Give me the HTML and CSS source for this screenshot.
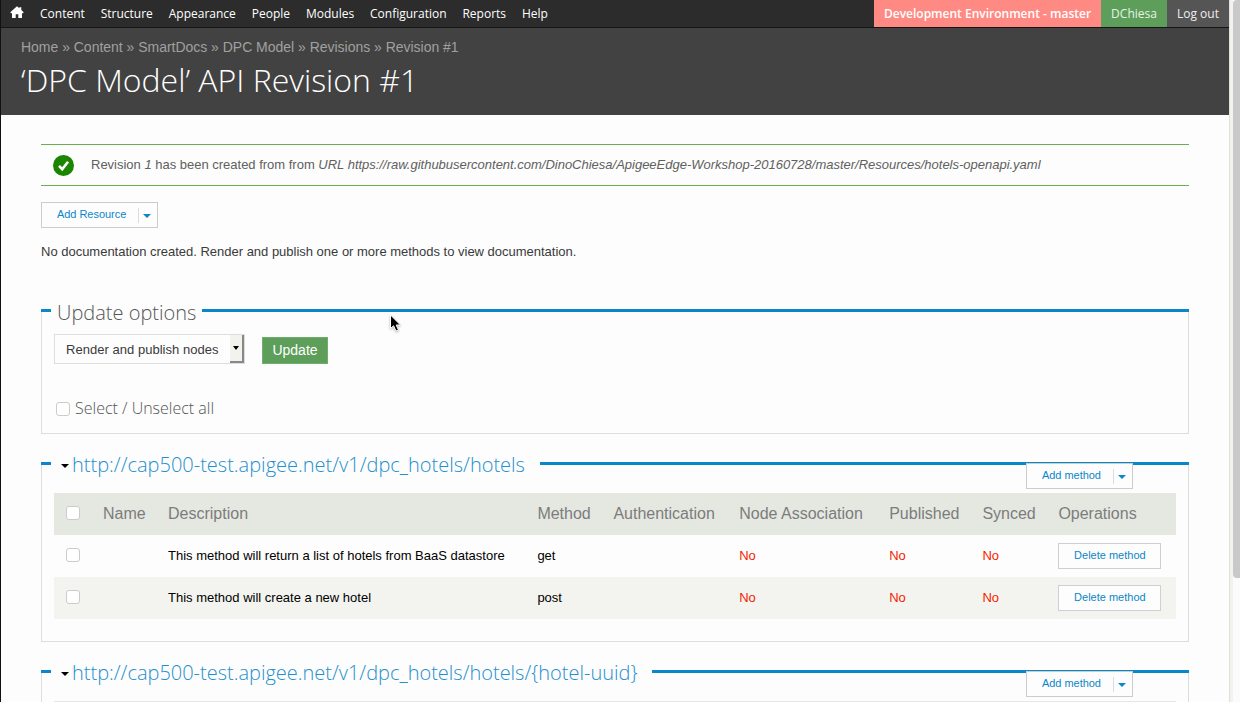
FILE: index.html
```html
<!DOCTYPE html>
<html lang="en">
<head>
<meta charset="utf-8">
<title>‘DPC Model’ API Revision #1</title>
<link rel="stylesheet" href="styles.css">
</head>
<body>
<div class="window">
<div class="page">
  <nav class="toolbar">
    <svg class="home" viewBox="0 0 14 13" width="14" height="13"><path fill="#fff" d="M7 .3 9.300 2.200V1.200h2V3.900L13.700 6.200 13 7.300h-1V12H8.300V8.200H5.700V12H2V7.300H1L.3 6.200z"/></svg>
    <a>Content</a><a>Structure</a><a>Appearance</a><a>People</a><a>Modules</a><a>Configuration</a><a>Reports</a><a>Help</a>
    <span class="env">Development Environment - master</span>
    <span class="user">DChiesa</span>
    <span class="logout">Log out</span>
  </nav>
  <header class="banner">
    <div class="crumbs">Home » Content » SmartDocs » DPC Model » Revisions » Revision #1</div>
    <h1>‘DPC Model’ API Revision #1</h1>
  </header>
  <main>
    <div class="status">
      <svg width="21" height="21" viewBox="0 0 21 21"><circle cx="10.500" cy="10.500" r="10.500" fill="#1c8500"/><path d="M6 10.800 9.200 14.200 15 6.800" fill="none" stroke="#fff" stroke-width="2.600"/></svg>
      <p>Revision <em>1</em> has been created from from <em>URL https://raw.githubusercontent.com/DinoChiesa/ApigeeEdge-Workshop-20160728/master/Resources/hotels-openapi.yaml</em></p>
    </div>
    <div class="drop resource"><span>Add Resource</span><i></i></div>
    <p class="note">No documentation created. Render and publish one or more methods to view documentation.</p>

    <section class="options">
      <div class="head"><b></b><h2>Update options</h2><b class="fill"></b></div>
      <div class="box">
        <div class="controls">
          <div class="select"><span>Render and publish nodes</span><i></i></div>
          <div class="update">Update</div>
        </div>
        <div class="all"><span class="check"></span><label>Select / Unselect all</label></div>
      </div>
    </section>

    <section class="hotels">
      <div class="head"><b></b><h2 class="link">http://cap500-test.apigee.net/v1/dpc_hotels/hotels</h2><b class="fill"></b></div>
      <div class="drop method"><span>Add method</span><i></i></div>
      <div class="box">
        <div class="row th"><span class="check"></span><span>Name</span><span>Description</span><span>Method</span><span>Authentication</span><span>Node Association</span><span>Published</span><span>Synced</span><span>Operations</span></div>
        <div class="row"><span class="check"></span><span></span><span>This method will return a list of hotels from BaaS datastore</span><span>get</span><span></span><span class="no">No</span><span class="no">No</span><span class="no">No</span><span class="delete">Delete method</span></div>
        <div class="row even"><span class="check"></span><span></span><span>This method will create a new hotel</span><span>post</span><span></span><span class="no">No</span><span class="no">No</span><span class="no">No</span><span class="delete">Delete method</span></div>
      </div>
    </section>

    <section class="uuid">
      <div class="head"><b></b><h2 class="link">http://cap500-test.apigee.net/v1/dpc_hotels/hotels/{hotel-uuid}</h2><b class="fill"></b></div>
      <div class="drop method"><span>Add method</span><i></i></div>
      <div class="box"><div class="row th"></div></div>
    </section>
  </main>
</div>
<div class="scrollbar"><div class="thumb"></div></div>
<svg class="pointer" width="16" height="20" viewBox="0 0 16 20"><path d="M2.500 1V14.500L5.600 11.800 8 17 10.500 16 8.200 11H12.500z" fill="#000" stroke="#fff" stroke-width="1"/></svg>
</div>
</body>
</html>
```
FILE: styles.css
```css
* { box-sizing: border-box; }
body { margin: 0; background: #fdfdfd; color: #3a3a3a; font: 13px "Liberation Sans", Arial, sans-serif; }
h1, h2, p { margin: 0; font-weight: 300; }
.window { display: flex; position: relative; width: 1240px; height: 702px; overflow: hidden; border-left: 1px solid #111; }
.page { width: 1228px; }
.toolbar { display: flex; height: 28px; background: #2c2c2c; border-bottom: 1px solid #151515; color: #fff; font: 12px/27px "Open Sans", sans-serif; padding-left: 9px; white-space: nowrap; }
.toolbar a { margin-right: 15.9px; }
.home { margin: 6px 16px 0 0; }
.env { margin-left: auto; width: 227px; background: #ff8a84; font-weight: 600; text-align: center; }
.user { width: 66px; background: #5c9e5a; color: #e6f3e4; text-align: center; }
.logout { width: 62px; background: #555; color: #eee; text-align: center; }
.banner { height: 87px; background: #424242; padding: 11px 20px 0; }
.crumbs { color: #a0a0a0; font-size: 14px; line-height: 16px; letter-spacing: -.02px; white-space: nowrap; }
h1 { color: #fff; font: 300 32px/44px "Open Sans", sans-serif; margin-top: 3px; white-space: nowrap; }
main { padding: 29px 40px 0; }
.status { display: flex; align-items: center; height: 42px; border: solid #68b04e; border-width: 1px 0; padding-left: 12px; color: #606060; white-space: nowrap; }
.status p { margin-left: 17px; padding-bottom: 2px; letter-spacing: -.008px; }
.drop { display: flex; align-items: center; height: 26px; background: #fdfdfd; border: 1px solid #ccc; color: #0b86c8; font-size: 11px; padding-left: 15px; white-space: nowrap; }
.drop span { padding-bottom: 2px; letter-spacing: -.04px; }
.drop i { margin-left: auto; width: 19px; height: 15px; border-left: 1px solid #ddd; display: flex; align-items: center; justify-content: center; padding-right: 2px; }
.drop i::after, .select i::after { content: ""; border: 4px solid transparent; border-top-color: #0b86c8; border-bottom: 0; margin-top: 2px; }
.resource { width: 117px; margin-top: 16px; }
.note { line-height: 16px; margin-top: 16px; letter-spacing: -.01px; }
.options { margin-top: 49px; }
.head { display: flex; height: 3px; }
.head b { width: 10px; height: 3px; background: #0a87ca; }
.head .fill { flex: 1; }
.head h2 { font: 300 20px/28px "Open Sans", sans-serif; margin: -10px 6px 0; height: 28px; color: #555; white-space: nowrap; }
.head .link { color: #2490cd; margin: -11px 15px 0 10px; display: flex; align-items: center; }
.uuid .link { letter-spacing: -.01px; }
.link::before { content: ""; border: 4px solid transparent; border-top: 4px solid #000; border-bottom: 0; margin: 1px 3px 0 0; }
.box { border: 1px solid #ddd; border-top: 0; padding: 0 12px; }
.options .box { height: 122px; padding-top: 22px; }
.controls { display: flex; }
.select { display: flex; width: 191px; height: 30px; border: 1px solid #ddd; padding-left: 11px; line-height: 29px; letter-spacing: .03px; }
.select i { width: 14px; height: 28px; margin-left: auto; background: #f3f3ee; border: solid #888; border-width: 0 2px 2px 0; display: flex; align-items: center; justify-content: center; }
.select i::after { border-width: 4px 3px 0; border-top-color: #000; margin: 0; }
.update { margin: 3px 0 0 17px; width: 66px; height: 27px; background: #5c9e5a; border: 1px solid #6fae6b; color: #fff; font-size: 14px; line-height: 25px; text-align: center; }
.all { display: flex; align-items: center; height: 22px; margin: 34px 0 0 2px; font: 300 16px/22px "Open Sans", sans-serif; color: #555; }
.check { width: 14px; height: 14px; border: 1px solid #ccc; border-radius: 3px; background: #fff; }
.all .check { margin-top: -1px; }
.all label { margin: -2px 0 0 5px; }
.hotels { margin-top: 28px; height: 180px; }
.hotels .box { height: 177px; }
.uuid { margin-top: 28px; }
.method { position: absolute; left: 1025px; width: 107px; margin-top: -2px; }
.hotels .box, .uuid .box { padding-top: 28px; }
.row { display: grid; grid-template-columns: 37px 65px 369.400px 76px 125.800px 150px 93.200px 76px 103px; align-items: center; height: 42px; padding-left: 12px; color: #000; white-space: nowrap; }
.row > span:not(.delete) { position: relative; top: -1px; }
.row.th > span:not(.check) { top: 0; }
.th { background: #e5e8e1; color: #7c7c7c; font-size: 16px; }
.even { background: #f3f4ef; }
.row .no { color: #f52300; }
.delete { height: 26px; background: #fdfdfd; border: 1px solid #d0d0d0; color: #0b86c8; font-size: 11px; line-height: 23px; text-align: center; }
.scrollbar { width: 11px; border-left: 1px solid #e0e0e0; background: linear-gradient(90deg, #f3f3ee 3px, #fbfbfb 3px); padding-left: 3px; }
.thumb { height: 578px; background: #c9c9c9; border-radius: 4px 0 0 4px; }
.pointer { position: absolute; left: 387px; top: 314px; filter: drop-shadow(0 1px 1px rgba(0, 0, 0, .3)); }
```
